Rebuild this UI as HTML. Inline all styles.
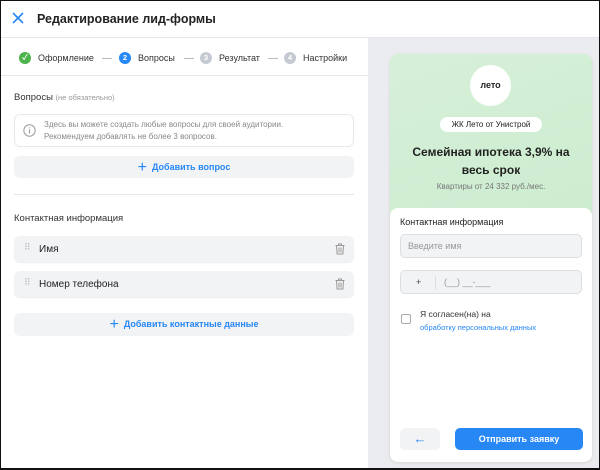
<!DOCTYPE html>
<html><head><meta charset="utf-8"><style>
*{box-sizing:border-box;margin:0;padding:0}
body{width:600px;height:470px;overflow:hidden;font-family:"Liberation Sans","Noto Sans CJK SC",sans-serif;background:#fff;position:relative;color:#222}
.frame{position:absolute;left:0;top:0;width:600px;height:470px;border:1px solid #111;border-bottom-width:2px;pointer-events:none;z-index:10}
.hdr{position:absolute;left:0;top:0;width:600px;height:38px;border-bottom:1px solid #e4e6ea}
.hdr .t{position:absolute;left:37px;top:12px;font-size:12.5px;font-weight:bold;color:#222}
.left{position:absolute;left:0;top:38px;width:368px;height:432px}
.steps{position:absolute;left:0;top:0;width:368px;height:38px;border-bottom:1px solid #e4e6ea;font-size:9px;color:#333}
.st{position:absolute;top:14px;display:flex;align-items:center}
.c{width:12px;height:12px;border-radius:50%;color:#fff;font-size:7.5px;text-align:center;line-height:12px;margin-right:7px;font-weight:bold}
.dash{position:absolute;top:20px;width:10px;height:1px;background:#bbb}
.sec{position:absolute;left:14px;font-size:9.5px;color:#333}
.box{position:absolute;left:14px;width:340px;border-radius:6px}
.btn{background:#f2f3f5;color:#2787f5;font-size:9px;font-weight:bold;text-align:center}
.row{background:#f2f3f5;height:26px;box-shadow:0 1px 1px rgba(0,0,0,.08);font-size:10px;color:#222}
.right{position:absolute;left:368px;top:38px;width:232px;height:432px;background:#ebecef}
.card{position:absolute;left:22px;top:16px;width:202px;height:408px;border-radius:8px;background:linear-gradient(160deg,#d6f0d8,#c2e8c6);overflow:hidden;box-shadow:0 1px 3px rgba(0,0,0,.1)}
.form{position:absolute;left:0;top:154px;width:202px;height:254px;background:#fff;border-radius:8px 8px 0 0}
.inp{position:absolute;left:10px;width:182px;height:24px;background:#f2f3f5;border:1px solid #dcdee2;border-radius:5px;font-size:9px;color:#999}
</style></head><body>
<div class="hdr">
<svg style="position:absolute;left:12px;top:12px" width="12" height="12" viewBox="0 0 12 12"><path d="M1 1L11 11M11 1L1 11" stroke="#2787f5" stroke-width="1.6"/></svg>
<div class="t">Редактирование лид-формы</div></div>
<div class="left">
<div class="steps">
<div class="st" style="left:19px"><div class="c" style="background:#4bb34b">✓</div>Оформление</div>
<div class="dash" style="left:102px"></div>
<div class="st" style="left:119px"><div class="c" style="background:#2787f5">2</div>Вопросы</div>
<div class="dash" style="left:184px"></div>
<div class="st" style="left:200px"><div class="c" style="background:#c5cad2">3</div>Результат</div>
<div class="dash" style="left:268px"></div>
<div class="st" style="left:284px"><div class="c" style="background:#c5cad2">4</div>Настройки</div>
</div>
<div class="sec" style="top:54px">Вопросы <span style="color:#999;font-size:7.5px">(не обязательно)</span></div>
<div class="box" style="top:76px;height:33px;border:1px solid #e7e8ec;font-size:8px;color:#888;line-height:12px;padding:4px 0 0 29px">
<svg style="position:absolute;left:8px;top:9px" width="13" height="13" viewBox="0 0 13 13"><circle cx="6.5" cy="6.5" r="5.7" fill="none" stroke="#999" stroke-width="1"/><path d="M6.5 5.5v4M6.5 3.5v.8" stroke="#999" stroke-width="1.1"/></svg>
Здесь вы можете создать любые вопросы для своей аудитории.<br>Рекомендуем добавлять не более 3 вопросов.</div>
<div class="box btn" style="top:118px;height:22px;line-height:22px"><span style="font-size:16px;font-weight:normal;vertical-align:-2px;margin-right:5px">+</span>Добавить вопрос</div>
<div style="position:absolute;left:14px;top:156px;width:340px;height:1px;background:#e7e8ec"></div>
<div class="sec" style="top:175px">Контактная информация</div>
<div class="box row" style="top:198px"><span style="position:absolute;left:10px;top:6px;color:#bbb;font-size:9px;letter-spacing:-1px">⠿</span><span style="position:absolute;left:25px;top:8px">Имя</span>
<svg style="position:absolute;right:9px;top:7px" width="10" height="12" viewBox="0 0 10 12"><path d="M0.5 2.5h9M3.5 2.5V1h3v1.5M1.5 2.5l.6 8.5h5.8l.6-8.5M4 4.5v5M6 4.5v5" fill="none" stroke="#999" stroke-width="1"/></svg></div>
<div class="box row" style="top:233px"><span style="position:absolute;left:10px;top:6px;color:#bbb;font-size:9px;letter-spacing:-1px">⠿</span><span style="position:absolute;left:25px;top:8px">Номер телефона</span>
<svg style="position:absolute;right:9px;top:7px" width="10" height="12" viewBox="0 0 10 12"><path d="M0.5 2.5h9M3.5 2.5V1h3v1.5M1.5 2.5l.6 8.5h5.8l.6-8.5M4 4.5v5M6 4.5v5" fill="none" stroke="#999" stroke-width="1"/></svg></div>
<div class="box btn" style="top:275px;height:23px;line-height:23px"><span style="font-size:16px;font-weight:normal;vertical-align:-2px;margin-right:5px">+</span>Добавить контактные данные</div>
</div>
<div class="right"><div class="card">
<div style="position:absolute;left:80px;top:11px;width:41px;height:41px;border-radius:50%;background:#fff;text-align:center;line-height:41px;font-size:9px;font-weight:bold">лето</div>
<div style="position:absolute;left:50px;top:63px;width:102px;height:15px;border-radius:8px;background:#fff;font-size:8px;text-align:center;line-height:15px">ЖК Лето от Унистрой</div>
<div style="position:absolute;left:0;top:89px;width:202px;text-align:center;font-size:12px;font-weight:bold;line-height:18px;color:#222">Семейная ипотека 3,9% на<br>весь срок</div>
<div style="position:absolute;left:0;top:128px;width:202px;text-align:center;font-size:8px;color:#777">Квартиры от 24 332 руб./мес.</div>
<div class="form">
<div style="position:absolute;left:10px;top:9px;font-size:9px;color:#222">Контактная информация</div>
<div class="inp" style="top:26px;padding:6px 7px">Введите имя</div>
<div class="inp" style="top:62px"><span style="position:absolute;left:15px;top:6px;color:#444">+</span><span style="position:absolute;left:34px;top:5px;width:1px;height:13px;background:#ddd"></span><span style="position:absolute;left:43px;top:6px">(__) __-___</span></div>
<div style="position:absolute;left:11px;top:106px;width:10px;height:10px;border:1px solid #aaa;border-radius:2px"></div>
<div style="position:absolute;left:30px;top:100px;font-size:8.5px;color:#333;line-height:13px">Я согласен(на) на<br><span style="color:#2787f5;font-size:7.5px">обработку персональных данных</span></div>
<div style="position:absolute;left:10px;top:220px;width:40px;height:22px;border-radius:5px;background:#f2f3f5;text-align:center;line-height:22px;color:#2787f5;font-size:13px">←</div>
<div style="position:absolute;left:65px;top:220px;width:128px;height:22px;border-radius:5px;background:#2787f5;color:#fff;text-align:center;line-height:22px;font-size:9px;font-weight:bold">Отправить заявку</div>
</div></div></div>
<div class="frame"></div>
</body></html>
